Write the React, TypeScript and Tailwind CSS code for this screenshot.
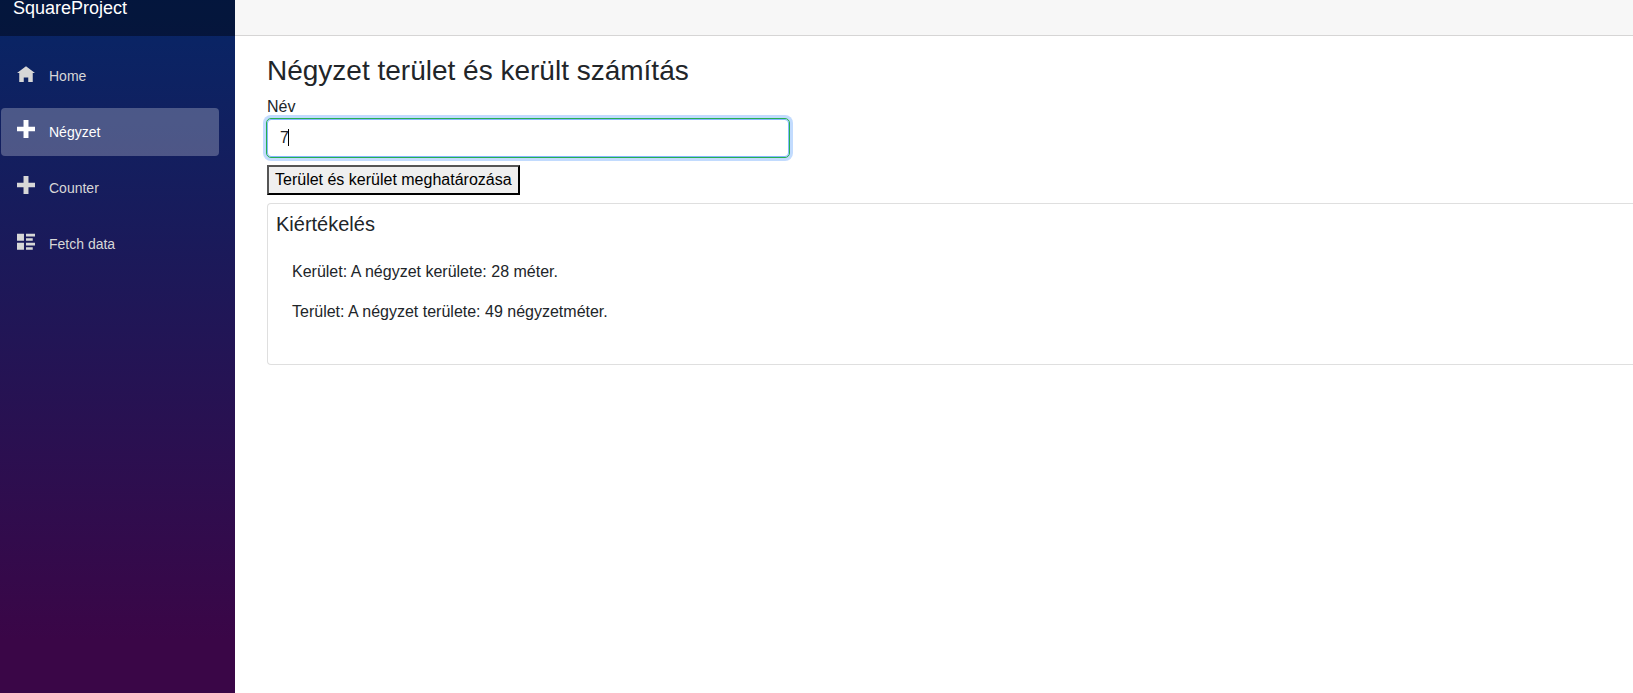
import { useEffect, useRef, useState } from "react";
import clsx from "clsx";

const HOME = "M4 0l-4 3h1v4h2v-2h2v2h2v-4.03l1 .03-4-3z";
const PLUS = "M2.9 0v2.95h-2.9v2.1h2.9v2.95h2.2v-2.95h2.9v-2.1h-2.9v-2.95z";
const LIST =
  "M0 0v3.1h3.1v-3.1zm4 0v1.2h4v-1.2zm0 2v1.1h3v-1.1zm-4 2v3.1h3.1v-3.1zm4 0v1.2h4v-1.2zm0 2v1.1h3v-1.1z";

const links = [
  { label: "Home", path: HOME, viewBox: "0 -1 8 8", active: false },
  { label: "Négyzet", path: PLUS, viewBox: "0 0 8 8", active: true },
  { label: "Counter", path: PLUS, viewBox: "0 0 8 8", active: false },
  { label: "Fetch data", path: LIST, viewBox: "0 -0.8 8 8", active: false },
];

function Sidebar() {
  return (
    <aside className="flex w-[235px] shrink-0 flex-col bg-[linear-gradient(180deg,#052767_-20px,#3a0647_640px)]">
      <div className="h-9 bg-black/40 pl-[13px]">
        <a href="#" className="block text-lg leading-4 text-white">
          SquareProject
        </a>
      </div>
      <nav className="mt-4 flex flex-col gap-2 pr-4 pl-px">
        {links.map((link) => (
          <a
            key={link.label}
            href="#"
            className={clsx(
              "flex h-12 items-start rounded pl-4 text-sm leading-[48px]",
              link.active ? "bg-white/25 text-white" : "text-[#d7d7d7]",
            )}
          >
            <svg viewBox={link.viewBox} className="mt-3 mr-[14px] size-[18px] fill-current" aria-hidden="true">
              <path d={link.path} />
            </svg>
            {link.label}
          </a>
        ))}
      </nav>
    </aside>
  );
}

export default function App() {
  const [side, setSide] = useState("7");
  const [edited, setEdited] = useState(false);
  const [result, setResult] = useState(7);
  const inputRef = useRef<HTMLInputElement>(null);

  useEffect(() => {
    const input = inputRef.current;
    input?.focus();
    input?.setSelectionRange(input.value.length, input.value.length);
  }, []);

  return (
    <div className="flex min-h-screen bg-white font-['Liberation_Sans',Arial,sans-serif] text-base text-[#212529]">
      <Sidebar />
      <main className="min-w-0 flex-1">
        <div className="h-9 border-b border-[#d6d5d5] bg-[#f7f7f7]" />
        <article className="pt-[19px] pl-8">
          <h3 className="mb-2 text-[28px] leading-8">Négyzet terület és került számítás</h3>
          <form
            onSubmit={(e) => {
              e.preventDefault();
              setResult(Number(side));
            }}
          >
            <label htmlFor="side" className="block leading-6">
              Név
            </label>
            <div className="relative w-[522px] max-w-full">
              <input
                id="side"
                ref={inputRef}
                value={side}
                onChange={(e) => {
                  setSide(e.target.value);
                  setEdited(true);
                }}
                className={clsx(
                  "block h-[38px] w-full rounded border border-[#86b7fe] px-3 shadow-[0_0_0_4px_#c2dbfe] outline-1 outline-[#26b050]",
                  !edited && "caret-transparent",
                )}
              />
              {!edited && (
                <span className="pointer-events-none absolute top-[10px] left-[21px] h-[17px] w-px bg-black" aria-hidden="true" />
              )}
            </div>
            <button
              type="submit"
              className="my-2 block h-[30px] border-2 border-t-[#555] border-r-black border-b-black border-l-[#555] bg-[#efefef] px-1.5 leading-6 text-black"
            >
              Terület és kerület meghatározása
            </button>
          </form>
          <section className="rounded-l border border-r-0 border-[#dfdfdf] p-2">
            <h5 className="mb-2 text-xl leading-6">Kiértékelés</h5>
            <div className="px-4 pt-4 pb-8">
              <p className="mb-4">Kerület: A négyzet kerülete: {4 * result} méter.</p>
              <p>Terület: A négyzet területe: {result * result} négyzetméter.</p>
            </div>
          </section>
        </article>
      </main>
    </div>
  );
}
